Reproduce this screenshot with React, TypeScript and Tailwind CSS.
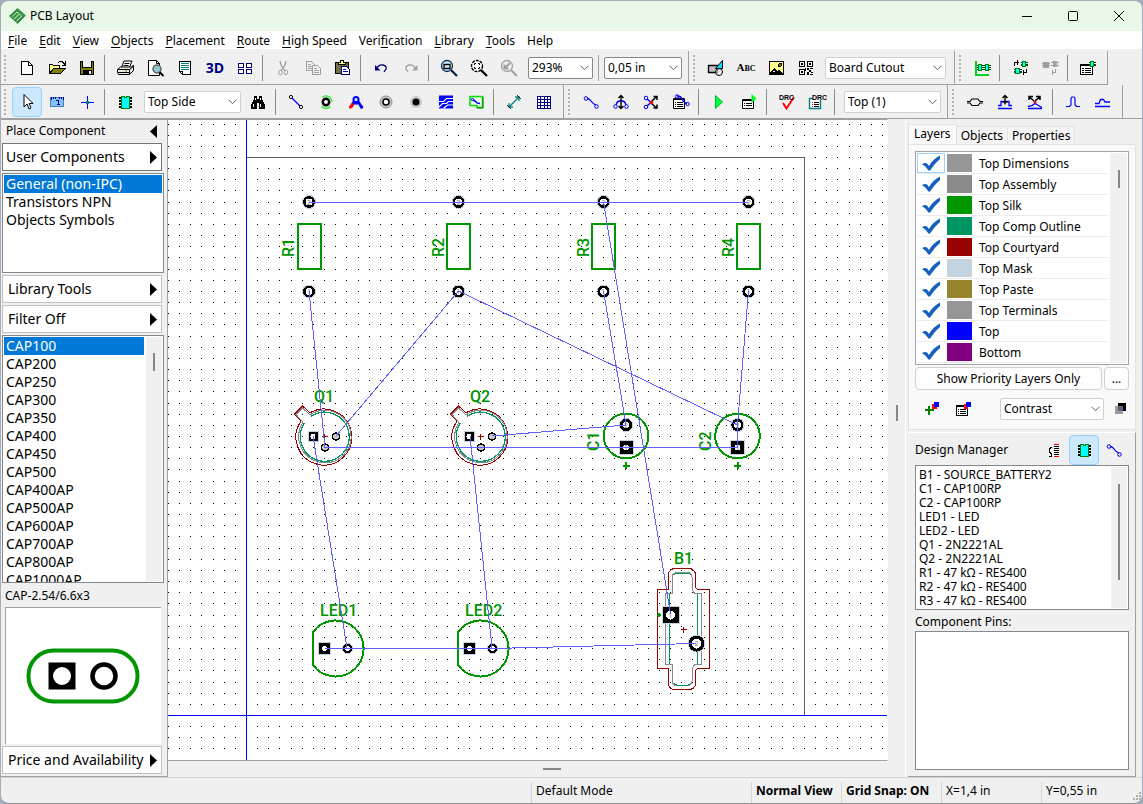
import React, { useState } from "react";

const K = "#000000";
const N = "#000080";
const B = "#0000ff";
const T = "#008080";
const G = "#a0a0a0";
const GREEN = "#009600";

function Ico({ children, soft = false }: { children: React.ReactNode; soft?: boolean }) {
  return (
    <svg
      viewBox="0 0 24 24"
      className="size-6 shrink-0"
      fill="none"
      stroke={K}
      strokeWidth={1}
      shapeRendering={soft ? "auto" : "crispEdges"}
      aria-hidden="true"
    >
      {children}
    </svg>
  );
}

function Chip({ x, y, w, h }: { x: number; y: number; w: number; h: number }) {
  return (
    <g>
      <path d={`M${x - 2} ${y + 1}h${w + 4}M${x - 2} ${y + h / 2}h${w + 4}M${x - 2} ${y + h - 1}h${w + 4}`} stroke="#004000" />
      <rect x={x} y={y} width={w} height={h} fill="#00ffff" stroke="#008000" />
    </g>
  );
}

const icons: Record<string, React.ReactNode> = {
  new: (
    <Ico>
      <path d="M6.500 5.500h7l4 4v9h-11z" fill="#fff" />
      <path d="M13.500 5.500v4h4" />
    </Ico>
  ),
  open: (
    <Ico>
      <path d="M4.500 17.500v-9h3l1 1h6v3" fill="#ffff80" />
      <path d="M4.500 17.500l4-5h12l-5 5z" fill="#808000" />
      <path d="M13 6.500l2-1h2l3 3M20.500 5v4h-4" />
    </Ico>
  ),
  save: (
    <Ico>
      <path d="M5.500 5.500h13v13h-13z" fill="#808000" />
      <path d="M8 5h8v6H8z" fill="#f0f0f0" stroke="none" />
      <path d="M7.500 5.500v6h9v-6" />
      <path d="M8 14h9v4H8z" fill={K} stroke="none" />
      <path d="M14 15h2v3h-2z" fill="#f0f0f0" stroke="none" />
    </Ico>
  ),
  print: (
    <Ico soft>
      <path d="M8.500 11.500l2.500-6.500h8l-2.500 6.500" fill="#fff" />
      <path d="M11.500 7.500h5M10.500 9.500h5" />
      <path d="M4.500 13.500l3-2.500h11l2-2v5.500l-4 4h-11l-1-2z" fill="#e8e8e8" />
      <path d="M4.500 13.500h12l4-3M16.500 13.500v5M5 16.500h11.500" />
      <path d="M12 15h2" stroke="#808000" />
    </Ico>
  ),
  preview: (
    <Ico soft>
      <path d="M5.500 4.500h8l3 3v12h-11z" fill="#fff" />
      <path d="M13.500 4.500v3h3" />
      <circle cx="14" cy="13" r="4" fill="#90c8d0" stroke="#606060" strokeWidth="1.500" />
      <path d="M16.500 16l4 4" strokeWidth="2" />
    </Ico>
  ),
  report: (
    <Ico>
      <path d="M6.500 5.500h11v13h-8l-3-3z" fill="#fff" />
      <path d="M8 7.500h8M8 9.500h8M8 11.500h8M8 13.500h8" stroke={T} />
      <path d="M6.500 15.500h3v3" />
    </Ico>
  ),
  d3: <span className="font-['Open_Sans',sans-serif] text-sm leading-5 font-bold text-[#000080]">3D</span>,
  tiles: (
    <Ico>
      <path d="M5.500 7.500h5v4h-5zM13.500 7.500h5v4h-5zM5.500 13.500h5v4h-5zM13.500 13.500h5v4h-5z" fill="#fff" stroke={N} />
    </Ico>
  ),
  cut: (
    <Ico soft>
      <path d="M9 5l1 4 4 6M15 5l-1 4-4 6" stroke={G} strokeWidth="1.300" />
      <ellipse cx="9.500" cy="16.500" rx="1.700" ry="2.300" stroke={G} />
      <ellipse cx="15" cy="16.500" rx="1.700" ry="2.300" stroke={G} />
    </Ico>
  ),
  copy: (
    <Ico>
      <path d="M5.500 5.500h5l3 3v6h-8z" stroke={G} />
      <path d="M11.500 9.500h5l3 3v6h-8z" fill="#f0f0f0" stroke={G} />
      <path d="M7 8.500h3M7 10.500h4M7 12.500h4M13 12.500h3M13 14.500h5M13 16.500h5" stroke={G} />
    </Ico>
  ),
  paste: (
    <Ico>
      <path d="M4.500 6.500h13v11h-13z" fill="#707040" />
      <path d="M7.500 8.500v-2h2v-2h3v2h2v2z" fill="#ffff80" />
      <path d="M10.500 10.500h5l3 3v5h-8z" fill="#fff" stroke={N} />
      <path d="M12 13.500h3M12 15.500h5" stroke={N} />
    </Ico>
  ),
  undo: (
    <Ico soft>
      <path d="M7 13q3-5 7-4t3 4l-2 3" stroke={N} strokeWidth="1.300" />
      <path d="M6 9v5.500h5.500z" fill={N} stroke="none" />
    </Ico>
  ),
  redo: (
    <Ico soft>
      <path d="M17 13q-3-5-7-4t-3 4l2 3" stroke={G} strokeWidth="1.300" />
      <path d="M18.500 9v5.500H13z" fill={G} stroke="none" />
    </Ico>
  ),
  zoomSel: (
    <Ico soft>
      <circle cx="10" cy="10" r="5.500" fill="#d8ecf8" stroke="#003060" strokeWidth="1.300" />
      <path d="M7 8.500h6v4H7z" stroke={K} strokeWidth="1.300" />
      <path d="M14 14l6 6" stroke="#002040" strokeWidth="2.200" />
    </Ico>
  ),
  zoomAll: (
    <Ico soft>
      <circle cx="10" cy="10" r="5.500" fill="#fff" strokeDasharray="3 1" strokeWidth="1.400" />
      <path d="M7.500 9V7.500H9M11 7.500h1.500V9M12.500 11v1.500H11M9 12.500H7.500V11" />
      <path d="M14 14l6 6" strokeWidth="2.200" />
    </Ico>
  ),
  zoomPrev: (
    <Ico soft>
      <circle cx="10" cy="10" r="5.500" stroke={G} strokeWidth="1.300" />
      <path d="M7 8.500V13h4.500z" fill={G} stroke={G} />
      <path d="M8 12l5-5M14 14l6 6" stroke={G} strokeWidth="2" />
    </Ico>
  ),
  shapes: (
    <Ico soft>
      <path d="M4.500 9.500h9v7h-9z" fill="#c0c0c0" strokeWidth="1.300" />
      <path d="M18.500 4.500v8h-7z" fill="#00e0ff" />
      <circle cx="15" cy="16" r="3.500" fill="#f0f0f0" fillOpacity=".6" />
    </Ico>
  ),
  abc: (
    <span className="font-['Liberation_Serif',serif] text-[11px] leading-4 font-bold">
      A<span className="text-[8px]">BC</span>
    </span>
  ),
  picture: (
    <Ico>
      <path d="M5.500 5.500h14v13h-14z" fill="#ffff90" />
      <path d="M6 16l4-4 3 3 2-1 4 4H6z" fill={K} stroke="none" />
      <path d="M9 15h2v1H9z" fill="#fff" stroke="none" />
      <circle cx="16" cy="9" r="1.500" fill="#808000" />
    </Ico>
  ),
  qr: (
    <Ico>
      <path d="M5.500 5.500h5v5h-5zM13.500 5.500h5v5h-5zM5.500 13.500h5v5h-5z" />
      <path
        d="M7 7h2v2H7zM15 7h2v2h-2zM7 15h2v2H7zM13 12h2v2h-2zM16 12h3v1h-3zM15 14h2v2h-2zM13 16h2v3h-2zM17 16h2v1h-2zM16 18h3v1h-3zM11 12h1v3h-1z"
        fill={K}
        stroke="none"
      />
    </Ico>
  ),
  align: (
    <Ico>
      <path d="M5.500 5v13.500H19" stroke="#00d020" strokeWidth="2" />
      <Chip x={8.5} y={8.5} w={3} h={6} />
      <Chip x={15.5} y={8.5} w={3} h={6} />
    </Ico>
  ),
  update: (
    <Ico>
      <Chip x={14.5} y={5.5} w={3} h={5} />
      <Chip x={7.5} y={12.5} w={4} h={5} />
      <path d="M6.500 10V6.500h4M9.500 4v5M18.500 13v3.500h-4M15.500 14v5" />
    </Ico>
  ),
  updateOff: (
    <Ico>
      <path d="M5 6h6v6H5zM15 5h4v6h-4z" fill={G} stroke="none" />
      <path d="M4 7.500h8M4 9.500h8M13 6.500h8M13 9.500h8" stroke={G} />
      <path d="M17.500 13v3.500h-4M14.500 14v5" stroke={G} />
    </Ico>
  ),
  listChip: (
    <Ico>
      <path d="M4.500 8.500h12v10h-12z" fill="#fff" />
      <path d="M5 9.500h11M6 12.500h2M9 12.500h6M6 14.500h2M9 14.500h6M6 16.500h2M9 16.500h6" />
      <Chip x={14.5} y={5.5} w={3} h={5} />
    </Ico>
  ),
  arrow: (
    <Ico soft>
      <path d="M9 4.500v12.500l3-3 2 5 2-1-2-4.500h4z" fill="#fff" />
    </Ico>
  ),
  ruler: (
    <Ico>
      <path d="M5.500 7.500h13v9h-13z" fill="#80c0ff" stroke="#4080c0" />
      <path d="M6.500 7v3M8.500 7v2M10.500 7v2M14.500 7v2M16.500 7v2M18.500 7v3" stroke={N} />
      <path d="M11 10.500h2.500v4M12 14.500h3" stroke={N} />
    </Ico>
  ),
  origin: (
    <Ico>
      <path d="M12.500 6v13M6 12.500h13" stroke={B} />
      <rect x="11.500" y="11.500" width="2" height="2" fill={T} stroke={T} />
    </Ico>
  ),
  chip: (
    <Ico>
      <path d="M6 7h3v2H6zM6 10h3v2H6zM6 13h3v2H6zM6 16h3v2H6zM16 7h3v2h-3zM16 10h3v2h-3zM16 13h3v2h-3zM16 16h3v2h-3z" fill={K} stroke="none" />
      <path d="M8.500 6.500h3v1h2v-1h3v12h-8z" fill="#00ffff" stroke="#008000" />
    </Ico>
  ),
  find: (
    <Ico>
      <path
        d="M8 6h3v3h2V6h3v3l1 2 2 4v4h-6v-6h-2v6H5v-4l2-4 1-2z"
        fill={K}
        stroke="none"
      />
      <path d="M7.500 14v3M14.500 14v3M9.500 8v2M14.500 8v2" stroke="#fff" />
    </Ico>
  ),
  net: (
    <Ico soft>
      <path d="M7 7l10 10" stroke={B} strokeWidth="1.300" />
      <circle cx="7" cy="7" r="1.600" fill="#fff" />
      <circle cx="17" cy="17" r="1.600" fill="#fff" />
    </Ico>
  ),
  pad: (
    <Ico soft>
      <circle cx="12" cy="12" r="3.200" fill="#fff" strokeWidth="2.500" />
      <path d="M8 7.200a6.200 6.200 0 0 1 10 5M16.500 16.500a6.200 6.200 0 0 1-9 0" stroke="#20f020" strokeWidth="1.200" />
    </Ico>
  ),
  via: (
    <Ico soft>
      <path d="M7 17l4.500-8h1l5 8" stroke={B} strokeWidth="2.600" />
      <path d="M7 17l2-3.500" stroke="red" strokeWidth="3" />
      <path d="M9.500 13.500h5" stroke={B} strokeWidth="2" />
      <circle cx="12" cy="9.500" r="2.500" fill="#e0f0ff" stroke={B} strokeWidth="2" />
      <circle cx="6.500" cy="17" r="1.600" fill="red" stroke="none" />
      <circle cx="17.500" cy="17" r="1.800" fill={B} stroke="none" />
    </Ico>
  ),
  hole: (
    <Ico soft>
      <circle cx="12" cy="12" r="6" fill="#c0c0c0" stroke="#909090" />
      <circle cx="12" cy="12" r="3" fill="#fff" strokeWidth="1.500" />
    </Ico>
  ),
  dot: (
    <Ico soft>
      <circle cx="12" cy="12" r="6" fill="#c8c8c8" stroke="none" />
      <circle cx="12" cy="12" r="3.500" fill={K} stroke="none" />
    </Ico>
  ),
  pour: (
    <Ico soft>
      <path d="M5 5.500h14v13H5z" fill={B} stroke="none" />
      <path d="M5 11.500h4.500l3-3H19M5 17l3.500-3.500h4l2-2H19M9.500 18.500l4-3.500H19" stroke="#fff" strokeWidth="1.200" />
    </Ico>
  ),
  pourNet: (
    <Ico soft>
      <path d="M6 6.500h12.500v11H13v-2H6z" fill="#f0fff0" stroke="#00e000" strokeWidth="1.600" />
      <path d="M19 7v11h-6" stroke="#008000" />
      <path d="M9 10q2 .5 3 2t4 1.500" stroke={B} strokeWidth="1.400" />
      <circle cx="8.500" cy="9.500" r="1.200" stroke={B} />
    </Ico>
  ),
  measure: (
    <Ico soft>
      <path d="M7 17L17 7M7 13v4h4M13 7h4v4" stroke={T} strokeWidth="1.300" />
      <path d="M5 15l4 4M15 5l4 4" strokeWidth=".8" />
    </Ico>
  ),
  grid: (
    <Ico>
      <path d="M5.500 6.500h13v12h-13zM5.500 9.500h13M5.500 12.500h13M5.500 15.500h13M8.500 6.500v12M12.500 6.500v12M15.500 6.500v12" fill="#fff" stroke={N} />
    </Ico>
  ),
  trace: (
    <Ico soft>
      <path d="M8 9q2-1 4 2t5 4" stroke={B} strokeWidth="1.300" />
      <circle cx="7" cy="8.500" r="1.800" stroke={B} />
      <circle cx="17.500" cy="16.500" r="1.800" stroke={B} />
    </Ico>
  ),
  traceUp: (
    <Ico soft>
      <path d="M7 15q1-4 4-4h2q3 0 4 4" stroke={B} strokeWidth="1.300" />
      <circle cx="6.500" cy="16.500" r="1.800" stroke={B} />
      <circle cx="17.500" cy="16.500" r="1.800" stroke={B} />
      <path d="M12 5.500v13M9.500 8l2.500-2.500L14.500 8M9.500 16l2.500 2.500 2.500-2.500" strokeWidth="1.400" />
    </Ico>
  ),
  traceX: (
    <Ico soft>
      <path d="M8 9l4 3.500M8 16l4-3.500" stroke={B} strokeWidth="1.400" />
      <path d="M12.500 11.500l5-5M12.500 13.500l5 4.500M14.500 6.500H18V10M14.500 18H18v-3.500" strokeWidth="1.500" />
      <circle cx="7" cy="8" r="1.800" stroke={B} />
      <circle cx="7" cy="17" r="1.800" stroke={B} />
      <circle cx="12.500" cy="12.500" r="1.800" fill="red" stroke="none" />
    </Ico>
  ),
  traceList: (
    <Ico soft>
      <path d="M4.500 8.500h11v10h-11z" fill="#fff" />
      <path d="M4.500 9.500h11M6 12.500h1M8 12.500h6M6 14.500h1M8 14.500h6M6 16.500h1M8 16.500h6" />
      <path d="M8 6q4 0 5 3t5 5" stroke={B} strokeWidth="1.300" />
      <circle cx="8" cy="6.500" r="1.700" stroke={B} />
      <circle cx="18.500" cy="14" r="1.700" stroke={B} />
    </Ico>
  ),
  play: (
    <Ico soft>
      <path d="M8.500 5.500v13l7-6.500z" fill="#00ff40" stroke="#00c020" />
    </Ico>
  ),
  playList: (
    <Ico soft>
      <path d="M5.500 9.500h11v9h-11z" fill="#fff" />
      <path d="M5.500 10.500h11M7 13.500h1M9 13.500h6M7 15.500h1M9 15.500h6" />
      <path d="M14.500 4v9l5-4.500z" fill="#00ff20" stroke="none" />
    </Ico>
  ),
  drc: (
    <Ico soft>
      <path d="M8 13l3.500 5.500L19 7" stroke="red" strokeWidth="2" />
      <text x="4" y="10" className="font-['Liberation_Sans',sans-serif] text-[7px] font-bold" fill={K} stroke="none">
        DRC
      </text>
    </Ico>
  ),
  drcList: (
    <Ico soft>
      <path d="M4.500 8.500h11v10h-11z" fill="#fff" stroke={T} strokeWidth="1.400" />
      <path d="M7 12.500h1M7 14.500h1M7 16.500h1" stroke="red" />
      <path d="M9 12.500h5M9 14.500h5M9 16.500h5" />
      <path d="M8 4h12v6H8z" fill="#f0f0f0" stroke="none" />
      <text x="7" y="10" className="font-['Liberation_Sans',sans-serif] text-[7px] font-bold" fill={K} stroke="none">
        DRC
      </text>
    </Ico>
  ),
  pair: (
    <Ico soft>
      <path d="M4 11.500h3l2-2.500h6l2 2.500h3M4 13h3l2 2.500h6l2-2.500h3" strokeWidth="1.200" />
      <path d="M8.500 11.500l1-1.500h5l1 1.500v1.500l-1 1.500h-5l-1-1.500z" fill="#f0f0f0" stroke="none" />
    </Ico>
  ),
  pairUp: (
    <Ico soft>
      <path d="M5 15.500h3v-4h8v4h3M5 18.500h14" stroke={B} strokeWidth="1.300" />
      <path d="M12 5.500v9M9.500 8l2.500-2.500L14.500 8M9.500 12h5" strokeWidth="1.400" />
    </Ico>
  ),
  pairX: (
    <Ico soft>
      <path d="M5 18.500h14M5 16.500q4 0 7-3l7 4" stroke={B} strokeWidth="1.300" />
      <path d="M6.500 7l4.500 4M16.500 7L12 11M6 10V6.500h4M13 6.500h4V10" strokeWidth="1.500" />
      <circle cx="12" cy="12" r="1.500" fill="red" stroke="none" />
    </Ico>
  ),
  pulse: (
    <Ico soft>
      <path d="M5 16.500h3.500l1.500-1.500V8.500L11 7h2l1 1.500V15l1.500 1.500H19" stroke={B} strokeWidth="1.200" />
    </Ico>
  ),
  pulsePair: (
    <Ico soft>
      <path d="M4 13.500h4l1.500-4h3l1.500 2.500h5M4 16.500h15" stroke={B} strokeWidth="1.300" />
    </Ico>
  ),
  addLayer: (
    <Ico>
      <path d="M16 5h5v5h-5z" fill={B} stroke="none" />
      <path d="M14 7h2v3h3v2h-5z" fill="red" stroke="none" />
      <path d="M11 9v9M7 13h9" stroke="#008000" strokeWidth="2" />
    </Ico>
  ),
  layerList: (
    <Ico>
      <path d="M5.500 8.500h11v10h-11z" fill="#fff" />
      <path d="M6 9.500h10M7 12.500h1M9 12.500h6M7 14.500h1M9 14.500h6M7 16.500h1M9 16.500h6" />
      <path d="M13 7h4v5h-4z" fill="red" stroke="none" />
      <path d="M15 5h5v5h-5z" fill={B} stroke="none" />
    </Ico>
  ),
  contrast: (
    <Ico>
      <path d="M11 6h8v8h-8z" fill={K} stroke="none" />
      <path d="M8 9h8v8H8z" fill="#9a9a9a" stroke="none" />
      <path d="M11 9h5v5h-5z" fill="#606080" stroke="none" />
    </Ico>
  ),
  sort: (
    <Ico>
      <path d="M12 8.500h5M12 12.500h5M12 16.500h5" />
      <path d="M12 6.500h5M12 18.500h5" stroke="red" />
      <path d="M12 10.500h5M12 14.500h5" />
      <path d="M10 9.500H8.500v1h-1v4h1v1.500M9.500 15v3h-3" />
    </Ico>
  ),
};

function Tool({ icon, label, active = false }: { icon: string; label: string; active?: boolean }) {
  return (
    <button
      type="button"
      aria-label={label}
      className={
        "flex h-[30px] w-[30px] shrink-0 items-center justify-center " +
        (active ? "rounded-sm border border-[#99d1ff] bg-[#cce8ff]" : "")
      }
    >
      {icons[icon]}
    </button>
  );
}

function Sep() {
  return <span className="mr-[5px] ml-[2px] h-[26px] w-px shrink-0 bg-[#8c8c8c]" />;
}

function Combo({
  label,
  value,
  options = [],
  className,
  dark = false,
}: {
  label: string;
  value: string;
  options?: string[];
  className: string;
  dark?: boolean;
}) {
  return (
    <span className={"grid shrink-0 items-center " + className}>
      <select
        aria-label={label}
        defaultValue={value}
        className={
          "col-start-1 row-start-1 h-[22px] w-full appearance-none rounded-xs border bg-white px-[3px] text-xs leading-4 text-black " +
          (dark ? "border-[#868686]" : "border-[#d0d0d0]")
        }
      >
        <option>{value}</option>
        {options.map((o) => (
          <option key={o}>{o}</option>
        ))}
      </select>
      <svg
        viewBox="0 0 9 6"
        className="pointer-events-none col-start-1 row-start-1 mr-1 h-1.5 w-[9px] justify-self-end"
        fill="none"
        stroke="#606060"
        aria-hidden="true"
      >
        <path d="M.5.700l4 4 4-4" />
      </svg>
    </span>
  );
}

function Bar({ children }: { children: React.ReactNode }) {
  return (
    <div className="flex h-[33px] shrink-0 items-center border-r border-[#a0a0a0] pr-1">
      <span className="mr-1 ml-1 h-[26px] w-1 shrink-0 bg-[linear-gradient(90deg,#b4b4b4_2px,transparent_2px)] [mask-image:repeating-linear-gradient(180deg,#000_0_2px,transparent_2px_4px)]" />
      {children}
    </div>
  );
}

const menus: [string, number][] = [
  ["File", 0],
  ["Edit", 0],
  ["View", 0],
  ["Objects", 0],
  ["Placement", 0],
  ["Route", 0],
  ["High Speed", 0],
  ["Verification", 4],
  ["Library", 0],
  ["Tools", 0],
  ["Help", -1],
];

const parts = [
  "CAP100", "CAP200", "CAP250", "CAP300", "CAP350", "CAP400", "CAP450", "CAP500",
  "CAP400AP", "CAP500AP", "CAP600AP", "CAP700AP", "CAP800AP", "CAP1000AP",
];

const layers: [string, string][] = [
  ["Top Dimensions", "#969696"],
  ["Top Assembly", "#8a8a8a"],
  ["Top Silk", "#009600"],
  ["Top Comp Outline", "#009664"],
  ["Top Courtyard", "#960000"],
  ["Top Mask", "#c3d3e0"],
  ["Top Paste", "#98842c"],
  ["Top Terminals", "#969696"],
  ["Top", "#0000ff"],
  ["Bottom", "#800080"],
];

const design = [
  "B1 - SOURCE_BATTERY2", "C1 - CAP100RP", "C2 - CAP100RP", "LED1 - LED", "LED2 - LED",
  "Q1 - 2N2221AL", "Q2 - 2N2221AL", "R1 - 47 kΩ - RES400", "R2 - 47 kΩ - RES400", "R3 - 47 kΩ - RES400",
];

const STEP = 11.16;
const gridPath = (() => {
  let d = "";
  for (let i = -7; i < 150; i++) {
    for (let j = -53; j < 50; j++) {
      d += `M${Math.round(246 + i * STEP)} ${Math.round(715 + j * STEP)}h1v1h-1z`;
    }
  }
  return d;
})();

function RingPad({ x, y, r, w }: { x: number; y: number; r: number; w: number }) {
  return (
    <g>
      <circle cx={x} cy={y} r={r + w / 2 + 1} fill="#c3d3e0" />
      <circle cx={x} cy={y} r={r} fill="#fff" stroke={K} strokeWidth={w} />
    </g>
  );
}

function SquarePad({ x, y, s, r }: { x: number; y: number; s: number; r: number }) {
  return (
    <g>
      <rect x={x - s / 2 - 1} y={y - s / 2 - 1} width={s + 2} height={s + 2} fill="#c3d3e0" />
      <rect x={x - s / 2} y={y - s / 2} width={s} height={s} fill={K} />
      <circle cx={x} cy={y} r={r} fill="#fff" />
    </g>
  );
}

function Mark({ x, y, color = "#960000" }: { x: number; y: number; color?: string }) {
  return <path d={`M${x - 3} ${y}h6M${x} ${y - 3}v6`} stroke={color} strokeWidth="1.500" fill="none" />;
}

function Name({ x, y, up = false, children }: { x: number; y: number; up?: boolean; children: string }) {
  return (
    <text
      x={x}
      y={y}
      transform={up ? `rotate(-90 ${x} ${y})` : undefined}
      className="font-[Roboto,sans-serif] text-base font-medium"
      fill={GREEN}
    >
      {children}
    </text>
  );
}

function Resistor({ x, name }: { x: number; name: string }) {
  return (
    <g>
      <rect x={x - 11.5} y="224" width="23" height="45" fill="none" stroke={GREEN} strokeWidth="2" />
      <Name x={x - 15} y={257} up>
        {name}
      </Name>
      <RingPad x={x} y={202} r={4.7} w={2.6} />
      <RingPad x={x} y={291.5} r={4.7} w={2.6} />
    </g>
  );
}

function Transistor({ x, name }: { x: number; name: string }) {
  return (
    <g fill="none">
      <g transform={`translate(${x} 436.500)`}>
        <path d="M-15 -23.700A28 28 0 1 1 -24 -15.500L-30.500 -22.500L-22.500 -30.500Z" stroke="#960000" />
        <path d="M-15 -21.500A26.200 26.200 0 1 1 -22 -14.300L-29 -22L-22.500 -28.500Z" stroke="#8a8a8a" />
        <path d="M-14 -20A24.500 24.500 0 1 1 -20.500 -13.500" stroke="#009664" strokeWidth="1.300" />
      </g>
      <SquarePad x={x - 12} y={436.5} s={9} r={2.5} />
      <circle cx={x + 11} cy="436.500" r="3.500" fill="#c8c8c8" stroke={K} strokeWidth="1.300" />
      <circle cx={x} cy="447.500" r="3.500" fill="#c8c8c8" stroke={K} strokeWidth="1.300" />
      <Mark x={x - 0.5} y={436.5} />
      <Name x={x - 11} y={402}>
        {name}
      </Name>
    </g>
  );
}

function Capacitor({ x, name }: { x: number; name: string }) {
  return (
    <g>
      <circle cx={x} cy="436" r="22.300" fill="none" stroke={GREEN} strokeWidth="2" />
      <Name x={x - 27} y={451} up>
        {name}
      </Name>
      <RingPad x={x} y={425} r={4.7} w={2.8} />
      <SquarePad x={x} y={447.5} s={13} r={3} />
      <path d={`M${x - 3.5} 465.500h7M${x} 462v7`} stroke={GREEN} strokeWidth="2" />
    </g>
  );
}

function Led({ x, name }: { x: number; name: string }) {
  return (
    <g>
      <path d={`M${x - 23} 632A28 28 0 1 1 ${x - 23} 665Z`} fill="none" stroke={GREEN} strokeWidth="2" />
      <Name x={x - 16} y={616}>
        {name}
      </Name>
      <SquarePad x={x - 11.5} y={648.5} s={11} r={2.5} />
      <RingPad x={x + 11.5} y={648.5} r={3.6} w={2} />
    </g>
  );
}

function Board() {
  return (
    <svg className="block size-full" role="img" aria-label="Circuit board" shapeRendering="crispEdges">
      <g transform="translate(-168 -120)">
        <path d={gridPath} fill={K} />
        <path d="M246.500 157.500H804.500V715" fill="none" stroke="#606060" />
        <path d="M246.500 0V2000M0 715.500H3000" stroke="#0000f0" />
        <Resistor x={309} name="R1" />
        <Resistor x={458.5} name="R2" />
        <Resistor x={603.5} name="R3" />
        <Resistor x={748.5} name="R4" />
        <Transistor x={325} name="Q1" />
        <Transistor x={481} name="Q2" />
        <Capacitor x={626} name="C1" />
        <Capacitor x={737.5} name="C2" />
        <Led x={336} name="LED1" />
        <Led x={481} name="LED2" />
        <g fill="none">
          <path
            d="M668.500 589.500V575.500q0-7 7-7h13q7 0 7 7V586q0 3.500 3 3.500h11v79h-11q-3 0-3 3.500v10.500q0 7-7 7h-13q-7 0-7-7v-14h-11v-79z"
            stroke="#960000"
          />
          <path
            d="M672.500 593.500V577q0-4.500 4.500-4.500h10.500q4.500 0 4.500 4.500v13l3 3.500h6.500v71H695l-3 3.500v13q0 4.500-4.500 4.500H677q-4.500 0-4.500-4.500v-16.500h-7v-71z"
            stroke="#8a8a8a"
          />
          <path d="M669.500 594v70M697.500 594v70M674 575q1-2 3-2h11q2 0 3 2M674 683q1 2 3 2h11q2 0 3-2" stroke="#009664" />
        </g>
        <SquarePad x={670.5} y={615} s={16} r={4.5} />
        <RingPad x={696.5} y={643.5} r={6.5} w={3} />
        <Mark x={683.5} y={629.5} />
        <circle cx="659" cy="615" r="1.700" fill={GREEN} />
        <Name x={674} y={564}>
          B1
        </Name>
        <g className="text-[7px]" fill="#808080" textAnchor="middle">
          {[309, 458.5, 603.5, 748.5].map((x) => (
            <g key={x}>
              <text x={x} y="204.500">2</text>
              <text x={x} y="294">1</text>
            </g>
          ))}
          {[626, 737.5].map((x) => (
            <g key={x}>
              <text x={x} y="427.500">2</text>
              <text x={x} y="450">1</text>
            </g>
          ))}
          <text x="670.500" y="617.500">1</text>
          <text x="696.500" y="646">2</text>
        </g>
        <path
          d="M309 202.500H748M309 291L325 447.500H737.500V425L748.500 291M458.500 291L336 436M458.500 291L737.500 425M313 436L347 648M470 436L492 648M492 436L626 425L603.500 291M603.500 202L670.500 614M324.500 648.500H492L696 643.500"
          fill="none"
          stroke="#6060ff"
        />
      </g>
    </svg>
  );
}

function MenuButton({ children, dark = false }: { children: string; dark?: boolean }) {
  return (
    <button
      type="button"
      className={
        "mr-[5px] flex h-7 shrink-0 items-center justify-between border bg-white pr-1 text-sm leading-[18px] whitespace-nowrap " +
        (dark ? "border-[#767676] pl-[3px]" : "border-[#c0c0c0] pl-[5px]")
      }
    >
      {children}
      <svg viewBox="0 0 7 13" className="h-[13px] w-[7px]" aria-hidden="true">
        <path d="M0 0v13l7-6.500z" />
      </svg>
    </button>
  );
}

function LayerRow({ name, color, first }: { name: string; color: string; first: boolean }) {
  const [on, setOn] = useState(true);
  return (
    <li className="flex h-[21px] items-center border-b border-[#ececec]">
      <label className="flex h-full flex-1 items-center">
        <span className={"grid h-5 w-7 place-items-center border " + (first ? "border-[#99d1ff]" : "border-transparent")}>
          <input
            type="checkbox"
            checked={on}
            onChange={() => setOn(!on)}
            className="col-start-1 row-start-1 size-4 appearance-none"
          />
          {on && (
            <svg viewBox="0 0 19 16" className="pointer-events-none col-start-1 row-start-1 h-4 w-[19px]" aria-hidden="true">
              <path d="M0 9Q3 7.500 5 8.500L7 11Q11 4 18 .5V4Q12 9 8 15.500Q7 16 6 15Q4 11.500 0 9Z" fill="#1560bd" />
            </svg>
          )}
        </span>
        <span className="mr-[7px] ml-[2px] h-[18px] w-[25px]" style={{ backgroundColor: color }} />
        <span className="pt-px text-xs leading-4">{name}</span>
      </label>
    </li>
  );
}

export default function App() {
  return (
    <div className="h-screen overflow-hidden bg-[#a4adbb] pt-px pr-px pl-px font-['Noto_Sans',sans-serif] text-xs text-black">
      <div className="flex h-full flex-col overflow-hidden rounded-t-lg rounded-b-lg border-b border-[#909090] bg-[#f0f0f0]">
        <header className="flex h-[30px] shrink-0 items-center bg-[#e9f7e8] pl-2">
          <svg viewBox="0 0 17 16" className="mr-1 h-4 w-[17px]" aria-hidden="true">
            <path d="M8.500 0L17 7.500 8.500 16 0 8z" fill="#3c9448" />
            <path d="M3 8.500l5-4.500 1.500 1.500M5 11l5.500-5 1.500 1.500M7.500 13l5.500-5" fill="none" stroke="#d8f0d8" strokeWidth="1" />
            <path d="M2 8l6-5.500M9 14l6-6" fill="none" stroke="#1e6c30" strokeWidth=".8" />
          </svg>
          <h1 className="flex-1 leading-4">PCB Layout</h1>
          <button type="button" aria-label="Minimize" className="flex h-full w-[46px] items-center justify-center">
            <svg viewBox="0 0 10 10" className="size-2.5" stroke={K}><path d="M0 5.500h10" /></svg>
          </button>
          <button type="button" aria-label="Maximize" className="flex h-full w-[46px] items-center justify-center">
            <svg viewBox="0 0 10 10" className="size-2.5" fill="none" stroke={K}><rect x=".5" y=".5" width="9" height="9" rx="1" /></svg>
          </button>
          <button type="button" aria-label="Close" className="flex h-full w-[46px] items-center justify-center">
            <svg viewBox="0 0 10 10" className="size-2.5" stroke={K}><path d="M0 0l10 10M10 0L0 10" /></svg>
          </button>
        </header>

        <nav className="flex h-[18px] shrink-0 items-center gap-3 bg-white pt-0.5 pl-[7px]">
          {menus.map(([m, u]) => (
            <button key={m} type="button" className="leading-4">
              {u < 0 ? m : (
                <>
                  {m.slice(0, u)}
                  <span className="underline underline-offset-2">{m[u]}</span>
                  {m.slice(u + 1)}
                </>
              )}
            </button>
          ))}
        </nav>

        <div className="mt-0.5 -ml-px shrink-0">
          <div className="flex">
            <div className="flex border-b border-[#a0a0a0]">
              <Bar>
                <Tool icon="new" label="New" />
                <Tool icon="open" label="Open" />
                <Tool icon="save" label="Save" />
                <Sep />
                <Tool icon="print" label="Print" />
                <Tool icon="preview" label="Print preview" />
                <Tool icon="report" label="Report" />
                <Tool icon="d3" label="3D view" />
                <Tool icon="tiles" label="Tile" />
                <Sep />
                <Tool icon="cut" label="Cut" />
                <Tool icon="copy" label="Copy" />
                <Tool icon="paste" label="Paste" />
                <Sep />
                <Tool icon="undo" label="Undo" />
                <Tool icon="redo" label="Redo" />
                <Sep />
                <Tool icon="zoomSel" label="Zoom window" />
                <Tool icon="zoomAll" label="Zoom all" />
                <Tool icon="zoomPrev" label="Zoom previous" />
                <Combo label="Zoom" value="293%" className="ml-1 w-[65px]" dark />
                <span className="mx-[5px] h-[26px] w-px bg-[#a0a0a0]" />
                <Combo label="Grid size" value="0,05 in" className="mr-0.5 w-[78px]" dark />
              </Bar>
              <Bar>
                <Tool icon="shapes" label="Shapes" />
                <Tool icon="abc" label="Text" />
                <Tool icon="picture" label="Picture" />
                <Tool icon="qr" label="QR code" />
                <Combo label="Shape layer" value="Board Cutout" className="mr-1 ml-1 w-[121px]" />
              </Bar>
              <Bar>
                <Tool icon="align" label="Align" />
                <Sep />
                <Tool icon="update" label="Update" />
                <Tool icon="updateOff" label="Renew" />
                <Sep />
                <Tool icon="listChip" label="Component list" />
              </Bar>
            </div>
          </div>
          <div className="flex border-b border-[#a0a0a0]">
            <Bar>
              <Tool icon="arrow" label="Select" active />
              <Tool icon="ruler" label="Measure" />
              <Tool icon="origin" label="Origin" />
              <Sep />
              <Tool icon="chip" label="Component" />
              <Combo label="Side" value="Top Side" options={["Bottom Side"]} className="mr-0.5 ml-1 w-[97px]" />
              <Tool icon="find" label="Find" />
              <Sep />
              <Tool icon="net" label="Net" />
              <Tool icon="pad" label="Pad" />
              <Tool icon="via" label="Route net" />
              <Tool icon="hole" label="Hole" />
              <Tool icon="dot" label="Via" />
              <Tool icon="pour" label="Copper pour" />
              <Tool icon="pourNet" label="Pour net" />
              <Sep />
              <Tool icon="measure" label="Dimension" />
              <Tool icon="grid" label="Table" />
            </Bar>
            <Bar>
              <Tool icon="trace" label="Trace" />
              <Tool icon="traceUp" label="Move trace" />
              <Tool icon="traceX" label="Edit trace" />
              <Tool icon="traceList" label="Trace list" />
              <Sep />
              <Tool icon="play" label="Run autorouter" />
              <Tool icon="playList" label="Autorouter setup" />
              <Sep />
              <Tool icon="drc" label="Check rules" />
              <Tool icon="drcList" label="Rule setup" />
              <Sep />
              <Combo label="Current layer" value="Top (1)" options={["Bottom (2)"]} className="mr-0.5 ml-1 w-[97px]" />
            </Bar>
            <Bar>
              <Tool icon="pair" label="Differential pair" />
              <Tool icon="pairUp" label="Move pair" />
              <Tool icon="pairX" label="Edit pair" />
              <Sep />
              <Tool icon="pulse" label="Meander" />
              <Tool icon="pulsePair" label="Pair meander" />
            </Bar>
          </div>
        </div>

        <div className="flex min-h-0 flex-1">
          <aside className="flex w-[167px] shrink-0 flex-col border-t border-r border-b border-[#a0a0a0] pl-px">
            <div className="flex h-[23px] shrink-0 items-center justify-between pr-2.5 pb-px pl-1">
              <h2 className="leading-4">Place Component</h2>
              <button type="button" aria-label="Collapse">
                <svg viewBox="0 0 7 13" className="h-[13px] w-[7px]" aria-hidden="true">
                  <path d="M7 0v13L0 6.500z" />
                </svg>
              </button>
            </div>
            <MenuButton dark>User Components</MenuButton>
            <ul role="listbox" aria-label="Library" className="mt-0.5 mr-[3px] h-[100px] shrink-0 border border-[#828790] bg-white p-px text-sm leading-[18px]">
              <li role="option" aria-selected="true" className="bg-[#0078d7] pl-0.5 text-white">General (non-IPC)</li>
              <li role="option" aria-selected="false" className="pl-0.5">Transistors NPN</li>
              <li role="option" aria-selected="false" className="pl-0.5">Objects Symbols</li>
            </ul>
            <div className="mt-0.5 mb-0.5 flex flex-col gap-0.5">
              <MenuButton>Library Tools</MenuButton>
              <MenuButton>Filter Off</MenuButton>
            </div>
            <div className="mr-[3px] flex min-h-0 flex-1 border border-[#828790] bg-white">
              <ul role="listbox" aria-label="Components" className="min-h-0 flex-1 overflow-hidden p-px text-sm leading-[18px]">
                {parts.map((p, i) => (
                  <li key={p} role="option" aria-selected={i === 0} className={"pl-0.5 " + (i === 0 ? "bg-[#0078d7] text-white" : "")}>
                    {p}
                  </li>
                ))}
              </ul>
              <div className="m-px flex w-4 justify-center bg-[#f0f0f0] pt-4">
                <span className="h-[18px] w-0.5 bg-[#868686]" />
              </div>
            </div>
            <p className="h-6 shrink-0 pl-[3px] leading-[26px]">CAP-2.54/6.6x3</p>
            <div className="mr-1.5 ml-[3px] h-[137px] shrink-0 border-t border-l border-[#a0a0a0] bg-white">
              <svg viewBox="0 0 154 136" className="size-full" role="img" aria-label="Component preview">
                <rect x="22" y="42.500" width="109" height="51" rx="25" fill="none" stroke={GREEN} strokeWidth="4" />
                <path d="M42 54.500h27v27H42z" />
                <circle cx="55.500" cy="68" r="9" fill="#fff" />
                <circle cx="97.500" cy="68" r="11.500" fill="#fff" stroke={K} strokeWidth="4.500" />
              </svg>
            </div>
            <div className="mt-0.5 mb-0.5 flex flex-col">
              <MenuButton>Price and Availability</MenuButton>
            </div>
          </aside>

          <main className="flex min-w-0 flex-1 flex-col">
            <div className="min-h-0 flex-1 overflow-hidden border-t border-r border-b border-t-[#a0a0a0] border-r-white border-b-[#a0a0a0] bg-white">
              <Board />
            </div>
            <div className="flex h-4 shrink-0 items-center justify-center">
              <span className="ml-12 h-0.5 w-[18px] bg-[#868686]" />
            </div>
          </main>

          <div className="flex w-[18px] shrink-0 items-center justify-center border-r border-white">
            <span className="mb-[70px] h-4 w-0.5 bg-[#868686]" />
          </div>

          <aside className="flex w-[236px] shrink-0 flex-col pt-[5px] pr-1.5 pl-0.5">
            <div role="tablist" className="flex h-5 shrink-0 items-end leading-4">
              <button role="tab" aria-selected="true" type="button" className="-mb-px h-[21px] border border-b-0 border-[#e2e2e2] bg-[#f9f9f9] px-[5px] pb-0.5">Layers</button>
              <button role="tab" aria-selected="false" type="button" className="h-[18px] border border-b-0 border-l-0 border-[#e2e2e2] bg-[#f3f3f3] px-1">Objects</button>
              <button role="tab" aria-selected="false" type="button" className="h-[18px] border border-b-0 border-l-0 border-[#e2e2e2] bg-[#f3f3f3] px-1">Properties</button>
            </div>
            <section className="shrink-0 border border-[#e2e2e2] bg-[#f9f9f9] px-1.5 pt-1.5 pb-[5px]">
              <div className="flex border border-[#a0a4ac] bg-white p-px">
                <ul className="flex-1">
                  {layers.map(([n, c], i) => (
                    <LayerRow key={n} name={n} color={c} first={i === 0} />
                  ))}
                </ul>
                <div className="ml-0.5 flex w-[17px] justify-center bg-[#f0f0f0] pt-[17px]">
                  <span className="h-[18px] w-0.5 bg-[#868686]" />
                </div>
              </div>
              <div className="mt-0.5 flex gap-0.5">
                <button type="button" className="h-[23px] flex-1 rounded border border-[#d0d0d0] bg-[#fdfdfd] leading-4">Show Priority Layers Only</button>
                <button type="button" aria-label="More layer options" className="h-[23px] w-[25px] rounded border border-[#d0d0d0] bg-[#fdfdfd] leading-4">...</button>
              </div>
              <div className="mt-1 flex h-[30px] items-center gap-[3px]">
                <Tool icon="addLayer" label="Add layer" />
                <Tool icon="layerList" label="Layer setup" />
                <span className="flex-1" />
                <Combo label="Contrast mode" value="Contrast" className="w-[104px]" />
                <button type="button" aria-label="Contrast" className="-mr-0.5">{icons.contrast}</button>
              </div>
            </section>
            <section className="mt-0.5 flex min-h-0 flex-1 flex-col border-t border-r border-b border-t-white border-r-[#a0a0a0] border-b-[#a0a0a0] pt-0.5 pr-1.5 pb-1.5 pl-[7px]">
              <div className="flex h-[30px] shrink-0 items-center">
                <h2 className="flex-1 leading-4">Design Manager</h2>
                <Tool icon="sort" label="Sort" />
                <Tool icon="chip" label="Components" active />
                <Tool icon="trace" label="Nets" />
              </div>
              <div className="flex h-[145px] shrink-0 border border-[#828790] bg-white">
                <ul role="listbox" aria-label="Design components" className="flex-1 pt-0.5 pl-[3px] leading-[14px]">
                  {design.map((d) => (
                    <li key={d} role="option" aria-selected="false">{d}</li>
                  ))}
                </ul>
                <div className="m-px flex w-4 justify-center bg-[#f0f0f0] pt-[17px]">
                  <span className="h-24 w-0.5 bg-[#868686]" />
                </div>
              </div>
              <h3 className="h-[21px] shrink-0 leading-6">Component Pins:</h3>
              <div className="min-h-0 flex-1 border border-[#828790] bg-white" />
            </section>
          </aside>
        </div>

        <footer className="flex h-[26px] shrink-0 items-stretch border-t border-[#d4d4d4] pt-1 leading-[18px]">
          <span className="flex-1" />
          <span className="w-[220px] border-l border-[#d4d4d4] pl-1">Default Mode</span>
          <span className="w-[90px] border-l border-[#d4d4d4] pl-1 font-bold">Normal View</span>
          <span className="w-[100px] border-l border-[#d4d4d4] pl-1 font-bold">Grid Snap: ON</span>
          <span className="w-[100px] border-l border-[#d4d4d4] pl-1">X=1,4 in</span>
          <span className="flex w-[101px] items-end justify-between border-l border-[#d4d4d4] pl-1">
            <span className="self-start">Y=0,55 in</span>
            <svg viewBox="0 0 9 9" className="mb-0.5 size-[9px]" aria-hidden="true">
              <path d="M6 0h2v2H6zM6 3h2v2H6zM3 3h2v2H3zM6 6h2v2H6zM3 6h2v2H3zM0 6h2v2H0z" fill="#b0b0b0" />
            </svg>
          </span>
        </footer>
      </div>
    </div>
  );
}
